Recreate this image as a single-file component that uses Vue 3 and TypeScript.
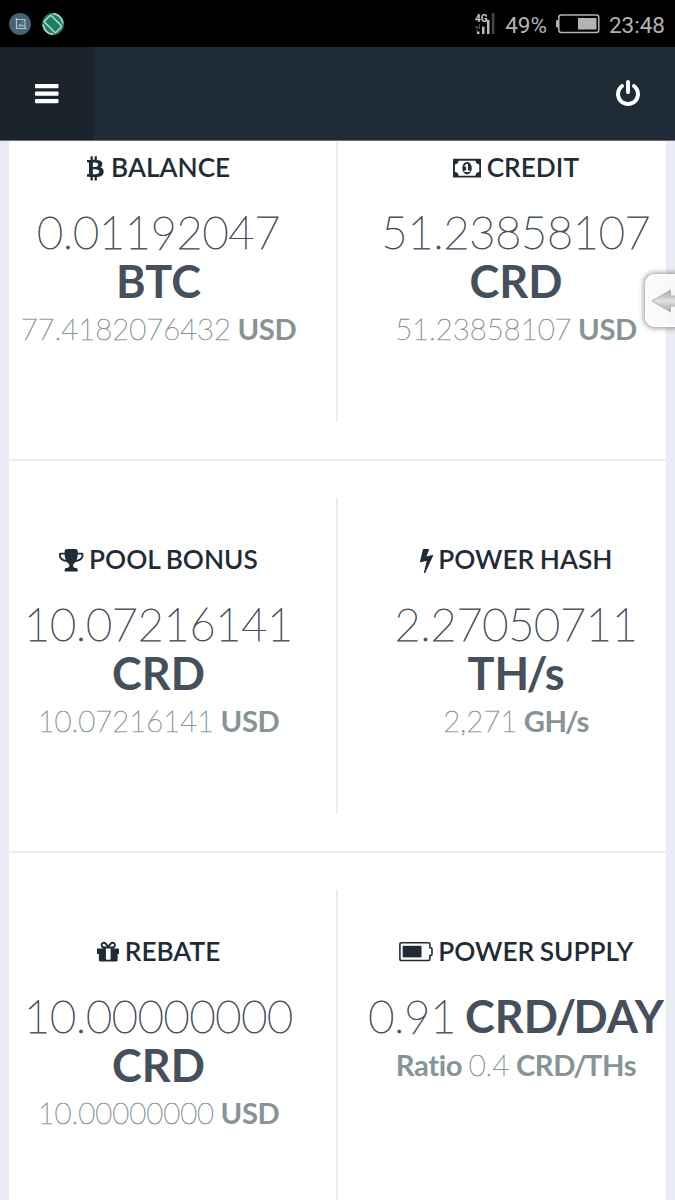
<script setup lang="ts">
interface Stat {
  icon: 'btc' | 'money' | 'trophy' | 'bolt' | 'gift' | 'battery'
  title: string
  value: string
  unit: string
  inline?: boolean
  prefix?: string
  sub: string
  subUnit: string
}

const rows: Stat[][] = [
  [
    { icon: 'btc', title: 'BALANCE', value: '0.01192047', unit: 'BTC', sub: '77.4182076432', subUnit: 'USD' },
    { icon: 'money', title: 'CREDIT', value: '51.23858107', unit: 'CRD', sub: '51.23858107', subUnit: 'USD' },
  ],
  [
    { icon: 'trophy', title: 'POOL BONUS', value: '10.07216141', unit: 'CRD', sub: '10.07216141', subUnit: 'USD' },
    { icon: 'bolt', title: 'POWER HASH', value: '2.27050711', unit: 'TH/s', sub: '2,271', subUnit: 'GH/s' },
  ],
  [
    { icon: 'gift', title: 'REBATE', value: '10.00000000', unit: 'CRD', sub: '10.00000000', subUnit: 'USD' },
    { icon: 'battery', title: 'POWER SUPPLY', value: '0.91', unit: 'CRD/DAY', inline: true, prefix: 'Ratio', sub: '0.4', subUnit: 'CRD/THs' },
  ],
]

const icons: Record<Exclude<Stat['icon'], 'battery'>, { box: string; d: string }> = {
  btc: {
    box: '256 0 1280 1792',
    d: 'M1301 597q18 182-131 258 117 28 175 103t45 214q-7 71-32.500 125t-64.500 89-97 58.500-121.500 34.500-145.500 15v255h-154v-251q-80 0-122-1v252h-154v-255q-18 0-54-.5t-55-.5h-200l31-183h111q50 0 58-51v-402h16q-6-1-16-1v-287q-13-68-89-68h-111v-164l212 1q64 0 97-1v-252h154v247q82-2 122-2v-245h154v252q79 7 140 22.500t113 45 82.500 78 36.500 114.500zm-215 545q0-36-15-64t-37-46-57.500-30.500-65.500-18.500-74-9-69-3-64.500 1-47.500 1v338q8 0 37 .5t48 .5 53-1.500 58.500-4 57-8.500 55.500-14 47.500-21 39.500-30 24.500-40 9.500-51zm-71-476q0-33-12.500-58.500t-30.500-42-48-28-55-16.500-61.500-8-58-2.500-54 1-39.500.5v307q5 0 34.500.5t46.500 0 50-2 55-5.500 51.500-11 48.500-18.500 37-27 27-38.500 9-51z',
  },
  money: {
    box: '0 0 1920 1792',
    d: 'M768 1152h384v-96h-128v-448h-114l-148 137 77 80q42-37 55-57h2v288h-128v96zm512-256q0 70-21 142t-59.500 134-101.500 101-138 39-138-39-101.500-101-59.500-134-21-142 21-142 59.500-134 101.500-101 138-39 138 39 101.500 101 59.500 134 21 142zm512 256v-512q-106 0-181-75t-75-181h-1152q0 106-75 181t-181 75v512q106 0 181 75t75 181h1152q0-106 75-181t181-75zm128-832v1152q0 26-19 45t-45 19h-1792q-26 0-45-19t-19-45v-1152q0-26 19-45t45-19h1792q26 0 45 19t19 45z',
  },
  trophy: {
    box: '64 0 1664 1792',
    d: 'M522 883q-74-162-74-371h-256v96q0 78 94.500 162t235.500 113zm1078-275v-96h-256q0 209-74 371 141-29 235.500-113t94.500-162zm128-128v128q0 71-41.500 143t-112 130-173 97.500-215.500 44.500q-42 54-95 95-38 34-52.500 72.500t-14.500 89.500q0 54 30.500 91t97.500 37q75 0 133.500 45.500t58.500 114.500v64q0 14-9 23t-23 9h-832q-14 0-23-9t-9-23v-64q0-69 58.500-114.500t133.500-45.500q67 0 97.500-37t30.500-91q0-51-14.500-89.500t-52.500-72.500q-53-41-95-95-113-5-215.500-44.500t-173-97.500-112-130-41.500-143v-128q0-40 28-68t68-28h288v-96q0-66 47-113t113-47h576q66 0 113 47t47 113v96h288q40 0 68 28t28 68z',
  },
  bolt: {
    box: '448 0 896 1792',
    d: 'M1333 566q18 20 7 44l-540 1157q-13 25-42 25-4 0-14-2-17-5-25.500-19t-4.500-30l197-808-406 101q-4 1-12 1-18 0-31-11-18-15-13-39l201-825q4-14 16-23t28-9h328q19 0 32 12.500t13 29.500q0 8-5 18l-171 463 396-98q8-2 12-2 19 0 34 15z',
  },
  gift: {
    box: '128 0 1536 1792',
    d: 'M1056 1356v-716h-320v716q0 25 18 38.500t46 13.500h192q28 0 46-13.500t18-38.500zm-456-844h195l-126-161q-26-31-69-31-40 0-68 28t-28 68 28 68 68 28zm688-96q0-40-28-68t-68-28q-43 0-69 31l-125 161h194q40 0 68-28t28-68zm376 256v320q0 14-9 23t-23 9h-96v416q0 40-28 68t-68 28h-1088q-40 0-68-28t-28-68v-416h-96q-14 0-23-9t-9-23v-320q0-14 9-23t23-9h440q-93 0-158.500-65.500t-65.500-158.500 65.500-158.500 158.500-65.500q107 0 168 77l128 165 128-165q61-77 168-77 93 0 158.500 65.500t65.500 158.500-65.500 158.500-158.500 65.500h440q14 0 23 9t9 23z',
  },
}

// Icon width at a 26.25px type size, taken from its box
const iconWidth = (box: string): number => (Number(box.split(' ')[2]) * 26.25) / 1792

// Splits a unit so that its slash can be set tighter than the letters
const parts = (unit: string): string[] => unit.split(/(\/)/)
</script>

<template>
  <div class="screen">
    <div class="status">
      <svg class="note" viewBox="0 0 22 22">
        <circle cx="11" cy="11" r="11" fill="#456575" />
        <path d="M6.500 6.500h9.500v8.500M7.500 5v10.500h10" fill="none" stroke="#b3c0c6" stroke-width="1.200" />
        <path d="M9 13.500l2-3 1.500 1.500 1.500-1 1 2.500z" fill="#9fb0b8" />
        <circle cx="13.500" cy="9" r=".8" fill="#9fb0b8" />
      </svg>
      <svg class="note" viewBox="0 0 22 22">
        <circle cx="11" cy="11" r="11" fill="#168067" />
        <g transform="rotate(45 11 11)" fill="none" stroke="#b5cec7">
          <rect x="3" y="6.300" width="16" height="9.400" rx="1" stroke-width="1.700" />
          <path d="M3.500 3.800Q10 -1.500 17.500 3.500M18.500 18.200Q12 23.500 4.500 18.500" stroke-width="1.700" />
        </g>
      </svg>
      <span class="grow"></span>
      <svg class="signal" viewBox="0 0 20 24">
        <text x="0" y="9.500" class="net">4G</text>
        <path d="M.5 16l1.500-2 1.500 2M2 14v5M4.500 12v5" fill="none" stroke="#555" stroke-width="1" />
        <rect x="2" y="19.500" width="2.500" height="2.500" fill="#bbb" />
        <rect x="7" y="14.500" width="2.500" height="7.500" fill="#bbb" />
        <rect x="12" y="8" width="2.500" height="14" fill="#bbb" />
        <rect x="16.800" y="1" width="2.600" height="21" fill="#444" />
      </svg>
      <span class="pct">49%</span>
      <svg class="batt" viewBox="0 0 44 20">
        <rect x="2.800" y="1" width="40" height="17.500" rx="2.500" fill="none" stroke="#b3b3b3" stroke-width="1.500" />
        <rect x="0" y="6" width="2.500" height="7.500" rx="1" fill="#b3b3b3" />
        <rect x="22" y="4" width="18.500" height="11.500" fill="#b3b3b3" />
      </svg>
      <span class="time">23:48</span>
    </div>

    <header class="bar">
      <button class="menu" aria-label="Menu">
        <svg viewBox="0 0 24 20">
          <rect y="0" width="23.500" height="4.300" rx="1" />
          <rect y="7.500" width="23.500" height="4.300" rx="1" />
          <rect y="15" width="23.500" height="4.300" rx="1" />
        </svg>
      </button>
      <svg class="power" viewBox="128 0 1536 1792">
        <path d="M1664 896q0 156-61 298t-164 245-245 164-298 61-298-61-245-164-164-245-61-298q0-182 80.500-343t226.500-270q43-32 95.500-25t83.500 50q32 42 24.500 94.500t-49.500 84.500q-98 74-151.500 181t-53.500 228q0 104 40.500 198.500t109.500 163.500 163.500 109.500 198.500 40.500 198.500-40.500 163.500-109.500 109.500-163.500 40.500-198.500q0-121-53.500-228t-151.500-181q-42-32-49.500-84.500t24.500-94.500q31-43 84-50t95 25q146 109 226.500 270t80.500 343zm-640-768v640q0 52-38 90t-90 38-90-38-38-90v-640q0-52 38-90t90-38 90 38 38 90z" />
      </svg>
    </header>

    <main class="panel">
      <section v-for="(row, r) in rows" :key="r" class="row" :class="{ first: r === 0 }">
        <article v-for="s in row" :key="s.title" class="cell">
          <h4 class="title">
            <svg
              v-if="s.icon !== 'battery'"
              class="ico"
              :viewBox="icons[s.icon].box"
              :style="{ width: iconWidth(icons[s.icon].box) + 'px' }"
            >
              <path :d="icons[s.icon].d" fill-rule="evenodd" />
            </svg>
            <svg v-else class="ico cellicon" viewBox="0 0 34 26">
              <path d="M2.300 3.700h27.200q1.400 0 1.400 1.400v3.600h.9q1.200 0 1.200 1.200v5.400q0 1.200-1.200 1.200h-.9v3.600q0 1.400-1.400 1.400h-27.200q-1.400 0-1.400-1.400v-15q0-1.400 1.400-1.400z" fill="none" stroke="currentColor" stroke-width="1.600" />
              <rect x="3.700" y="6.800" width="18.800" height="11.600" />
            </svg>
            {{ s.title }}
          </h4>
          <p class="value" :class="{ single: s.inline }">
            <span class="thin">{{ s.value }}</span>
            <b><span v-for="(p, i) in parts(s.unit)" :key="i" :class="{ slash: p === '/' }">{{ p }}</span></b>
          </p>
          <p class="sub">
            <b v-if="s.prefix">{{ s.prefix }}</b> <span class="thin">{{ s.sub }}</span> <b><span v-for="(p, i) in parts(s.subUnit)" :key="i" :class="{ slash: p === '/' }">{{ p }}</span></b>
          </p>
        </article>
      </section>
    </main>

    <div class="handle">
      <svg viewBox="0 0 32 24">
        <defs>
          <linearGradient id="arrow" x1="0" y1="0" x2="0" y2="1">
            <stop offset="0" stop-color="#a5a5a5" />
            <stop offset=".5" stop-color="#e2e2e2" />
            <stop offset="1" stop-color="#a5a5a5" />
          </linearGradient>
        </defs>
        <path d="M1 12L19.500 1v6H32v10H19.500v6z" fill="url(#arrow)" stroke="#b4b4b4" />
      </svg>
    </div>
  </div>
</template>

<style>
body {
  margin: 0;
  overflow: hidden;
}
</style>

<style scoped>
.screen {
  position: relative;
  width: 675px;
  height: 1200px;
  overflow: hidden;
  display: flex;
  flex-direction: column;
  background: #e9ecf2;
  font-family: Lato, "Open Sans", sans-serif;
  font-variant-ligatures: none;
}
.status {
  flex: none;
  box-sizing: border-box;
  height: 47px;
  padding: 0 10px 0 9px;
  display: flex;
  align-items: center;
  background: #000;
  color: #b3b3b3;
  font: 400 22.500px/47px Roboto, sans-serif;
}
.note {
  width: 22px;
  height: 22px;
  margin-right: 11px;
}
.grow {
  flex: 1;
}
.signal {
  width: 20px;
  height: 24px;
  margin-right: 10px;
}
.net {
  font: 700 10px Roboto, sans-serif;
  fill: #c8c8c8;
}
.pct,
.time {
  padding-top: 3px;
}
.batt {
  width: 44px;
  height: 20px;
  margin: 0 9px;
}
.bar {
  flex: none;
  box-sizing: border-box;
  height: 94px;
  padding-right: 35px;
  display: flex;
  align-items: center;
  justify-content: space-between;
  background: #1f2b36;
  border-bottom: 1px solid #67707a;
}
.menu {
  width: 94px;
  height: 93px;
  padding: 0;
  border: 0;
  display: flex;
  align-items: center;
  justify-content: center;
  background: #1a242d;
}
.menu svg {
  width: 24px;
  height: 20px;
  fill: #fff;
}
.power {
  width: 24px;
  height: 28px;
  fill: #fff;
}
.panel {
  flex: 1;
  min-height: 0;
  margin: 0 9px;
  background: #fff;
}
.row {
  box-sizing: border-box;
  height: 392px;
  padding: 37px 0 38px;
  display: flex;
  border-bottom: 2px solid #ebecef;
}
.row.first {
  height: 320px;
  padding-top: 0;
}
.cell {
  flex: none;
  box-sizing: border-box;
  width: 329px;
  padding-top: 45px;
  padding-right: 28px;
  display: flex;
  flex-direction: column;
  align-items: center;
  border-right: 2px solid #ebecef;
  white-space: nowrap;
}
.cell:last-child {
  width: 328px;
  padding-left: 28px;
  padding-right: 0;
  border-right: 0;
}
.first .cell {
  padding-top: 10px;
}
.title {
  margin: 0;
  color: #1f2b36;
  font-size: 26.250px;
  font-weight: 600;
  line-height: 32px;
  word-spacing: -1px;
}
.ico {
  height: 26.250px;
  vertical-align: -3.750px;
  fill: currentColor;
}
.cellicon {
  width: 34px;
  height: 26px;
}
.value {
  margin: 25px 0 0;
  display: flex;
  flex-direction: column;
  align-items: center;
  color: #464f5c;
  font-size: 45px;
  line-height: 48.500px;
}
.value.single {
  flex-direction: row;
  gap: 9px;
}
.thin {
  font-weight: 200;
  letter-spacing: -0.005em;
  -webkit-text-stroke: 0.8px currentColor;
}
.value b,
.sub b {
  font-weight: 700;
}
.slash {
  margin: 0 -0.060em;
}
.sub {
  margin: 7px 0 0;
  color: #869496;
  font-size: 29.250px;
  line-height: 34px;
  word-spacing: -1px;
}
.sub .thin {
  letter-spacing: 0;
  -webkit-text-stroke-width: 0.6px;
}
.sub b {
  letter-spacing: -0.4px;
}
.handle {
  position: absolute;
  top: 274px;
  left: 645px;
  box-sizing: border-box;
  width: 44px;
  height: 53px;
  padding: 13px 0 0 4px;
  border: 2px solid #fff;
  border-radius: 10px;
  background: rgba(250, 250, 251, 0.9);
  box-shadow: 0 0 4px 2px rgba(90, 90, 90, 0.5);
}
.handle svg {
  display: block;
  width: 32px;
  height: 24px;
}
</style>
